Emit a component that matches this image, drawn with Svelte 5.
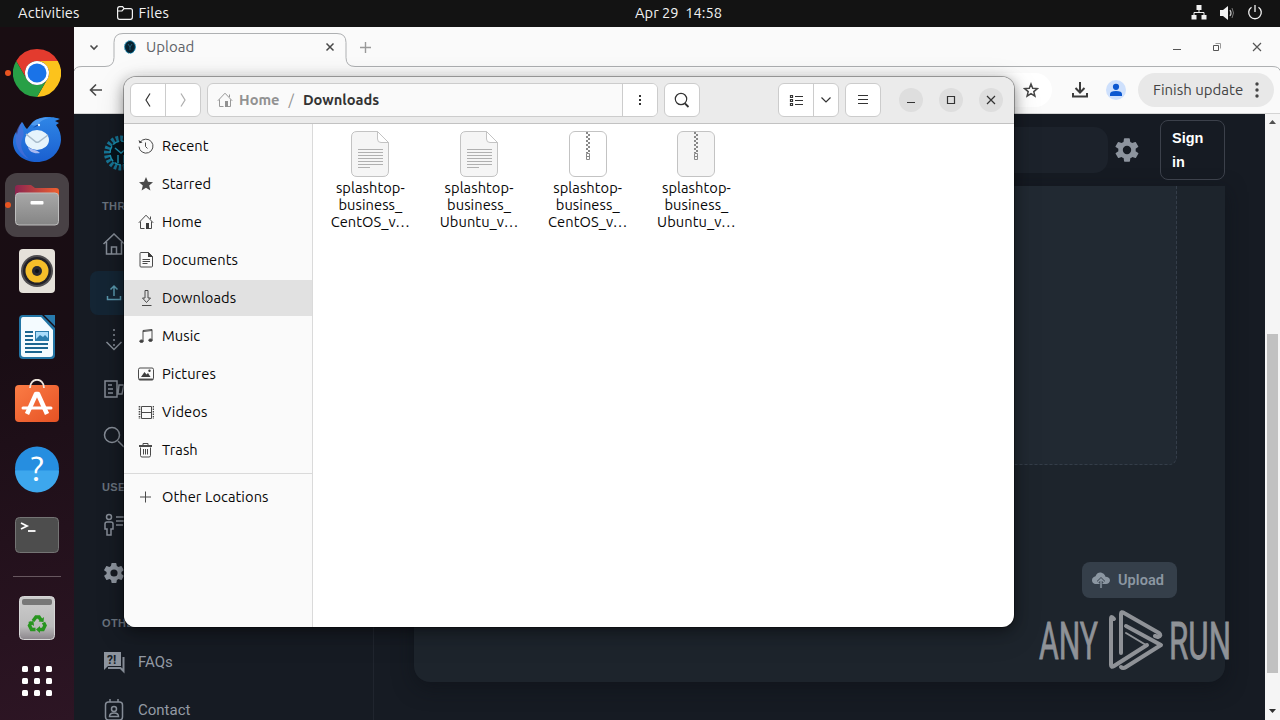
<script lang="ts">
	type Place = { name: string; icon: string };

	const places: Place[] = [
		{ name: 'Recent', icon: 'recent' },
		{ name: 'Starred', icon: 'star' },
		{ name: 'Home', icon: 'home' },
		{ name: 'Documents', icon: 'document' },
		{ name: 'Downloads', icon: 'download' },
		{ name: 'Music', icon: 'music' },
		{ name: 'Pictures', icon: 'picture' },
		{ name: 'Videos', icon: 'video' },
		{ name: 'Trash', icon: 'trash' }
	];

	const files = [
		{ lines: ['splashtop-', 'business_', 'CentOS_v…'], kind: 'text' },
		{ lines: ['splashtop-', 'business_', 'Ubuntu_v…'], kind: 'text' },
		{ lines: ['splashtop-', 'business_', 'CentOS_v…'], kind: 'zip' },
		{ lines: ['splashtop-', 'business_', 'Ubuntu_v…'], kind: 'zip dim' }
	];

	const apps = ['chrome', 'thunderbird', 'files', 'rhythmbox', 'writer', 'software', 'help', 'terminal'];
	const running = ['chrome', 'files'];

	let selected = $state('Downloads');
</script>

{#snippet placeIcon(name: string)}
	<svg class="place-icon" width="16" height="16" viewBox="0 0 16 16" fill="none" stroke="#4a4a4a">
		{#if name === 'recent'}
			<path d="M2.2 4.2A7 7 0 1 1 1 8.6M7.5 4.5v4l2 2" />
			<path d="M.5 2l1 3.2 3-.8z" fill="#3d3d3d" stroke="none" />
		{:else if name === 'star'}
			<path d="M8 1l2 4.8 5 .4-3.8 3.3 1.2 5L8 11.8l-4.4 2.7 1.2-5L1 6.2l5-.4z" fill="#4a4a4a" stroke="none" />
		{:else if name === 'home'}
			<path d="M.8 8.8L8 1.2l7.2 7.6M2.5 7.5v7h4M13.5 7.5v7h-3M12.5 5V2.5" />
			<path d="M8 9h3v6H8z" fill="#3d3d3d" stroke="none" />
		{:else if name === 'document'}
			<path d="M3 .5h7.500l4 4v9.500q0 1-1 1h-10.500q-1 0-1-1v-12.500q0-1 1-1zM4.500 7.500h7.500M4.500 9.500h7.500M4.500 11.500h5" />
			<path d="M10 0v5h5z" fill="#3d3d3d" stroke="none" />
		{:else if name === 'download'}
			<path d="M7 .5h3v7.500h2.500L8.500 12.500 4.500 8H7zM4 15.500h9.500" />
		{:else if name === 'music'}
			<path d="M5 13V2.500l9-1V12M5 3.500l9-1" />
			<ellipse cx="3.500" cy="13.200" rx="1.700" ry="1.300" fill="#3d3d3d" /><ellipse cx="12.500" cy="12.200" rx="1.700" ry="1.300" fill="#3d3d3d" />
		{:else if name === 'picture'}
			<rect x=".5" y="2" width="15" height="12" rx="1.500" />
			<path d="M1 13.300h14" stroke-width="1.500" />
			<path d="M3 11l3.500-5 2 2.500L10 7l2.500 4z" fill="#3d3d3d" stroke="none" /><circle cx="11.500" cy="4.800" r="1.200" fill="#3d3d3d" stroke="none" />
		{:else if name === 'video'}
			<path d="M3.500 2.500h10v12h-10zM3.500 8.500h10" />
			<path d="M1.500 2v13M15.500 2v13" stroke-width="1.600" stroke-dasharray="1.500 1" />
		{:else if name === 'trash'}
			<path d="M2.500 5.500v8q0 1.500 1.500 1.500h7q1.500 0 1.500-1.500v-8M5.500 7v5.500M7.500 7v5.500M9.500 7v5.500M5 3V1.500h5V3" />
			<path d="M1 4h13" stroke-width="2" />
		{:else}
			<path d="M7.500 2.500v11M2 8h11" />
		{/if}
	</svg>
{/snippet}

{#snippet gear(size: number)}
	<svg width={size} height={size} viewBox="0 0 24 24" fill="#8d949e">
		<path
			fill-rule="evenodd"
			d="M19.400 13a7.500 7.500 0 0 0 0-2l2.100-1.600a.5.500 0 0 0 .1-.7l-2-3.400a.5.500 0 0 0-.6-.2l-2.500 1a7.300 7.300 0 0 0-1.700-1l-.4-2.700a.5.500 0 0 0-.5-.4h-4a.5.500 0 0 0-.5.400l-.4 2.700a7.700 7.700 0 0 0-1.700 1l-2.500-1a.5.500 0 0 0-.6.200l-2 3.400a.5.500 0 0 0 .1.700L4.600 11a7.900 7.900 0 0 0 0 2l-2.200 1.600a.5.500 0 0 0-.1.700l2 3.400c.1.200.4.300.6.200l2.500-1a7.300 7.300 0 0 0 1.700 1l.4 2.700c0 .2.200.4.500.4h4c.2 0 .5-.2.500-.4l.4-2.700a7.700 7.700 0 0 0 1.700-1l2.500 1c.2.100.5 0 .6-.2l2-3.400a.5.500 0 0 0-.1-.7zM12 15.600a3.600 3.600 0 1 1 0-7.200 3.600 3.600 0 0 1 0 7.200z"
		/>
	</svg>
{/snippet}

{#snippet appIcon(name: string)}
	<svg width="48" height="48" viewBox="0 0 48 48">
		{#if name === 'chrome'}
			<path d="M24 0A24 24 0 0 1 44.800 12H24A12 12 0 0 0 13.600 30L3.200 12A24 24 0 0 1 24 0z" fill="#e33b2e" />
			<path d="M44.800 12A24 24 0 0 1 24 48L34.400 30A12 12 0 0 0 24 12z" fill="#fcc31c" />
			<path d="M3.200 12A24 24 0 0 0 24 48L34.400 30A12 12 0 0 1 13.600 30z" fill="#28a046" />
			<circle cx="24" cy="24" r="12" fill="#fff" /><circle cx="24" cy="24" r="9.500" fill="#1a73e8" />
		{:else if name === 'thunderbird'}
			<linearGradient id="bird" x2="0" y2="1"><stop stop-color="#2f86e6" /><stop offset="1" stop-color="#1a5fd0" /></linearGradient>
			<path d="M9 7c2 2 2 4 5 7l4-5c4-5 10-7 17-7 5 0 10 1 12 2l-5 2 4 2-3 2c4 5 5 10 5 15-1 13-11 22-24 22C11 47 0 39 0 27c0-4 1-7 3-10l1 3c1-5 2-9 5-13z" fill="url(#bird)" />
			<path d="M18 10c3-6 12-8 18-7-5 1-9 3-12 8z" fill="#4f9bf0" />
			<path d="M3 18c-2 11 3 22 13 26-7-6-10-14-6-22 2-4-1-8-1-15-3 3-5 7-6 11z" fill="#5370d8" opacity=".6" />
			<ellipse cx="24" cy="25" rx="12" ry="10" fill="#e6f4fc" />
			<path d="M13 19l10 8q2 1 4-1l8-6" fill="none" stroke="#a9bccb" stroke-width="1.500" />
			<path d="M15 32c4 3 8 2 12 6-6 1-11-1-12-6z" fill="#a8b9f1" />
			<path d="M20 13q4-5 8-3-5 1-8 3z" fill="#103f9c" />
			<circle cx="26" cy="10" r="1.200" fill="#eaf6ff" />
		{:else if name === 'files'}
			<linearGradient id="folder"><stop stop-color="#8b2450" /><stop offset="1" stop-color="#ef6130" /></linearGradient>
			<linearGradient id="drawer" x2="0" y2="1"><stop stop-color="#a8a8a8" /><stop offset="1" stop-color="#858585" /></linearGradient>
			<path d="M2 7q0-3 3-3h13l4 3h21q3 0 3 3v10H2z" fill="url(#folder)" />
			<rect x="2.500" y="12" width="43" height="32" rx="3.500" fill="url(#drawer)" stroke="#bebebe" />
			<rect x="17.500" y="20" width="13" height="3.500" rx="1" fill="#fff" />
		{:else if name === 'rhythmbox'}
			<rect x="6" y="2" width="36" height="44" rx="4" fill="#e5e1da" />
			<circle cx="24" cy="24" r="16" fill="#504e50" /><circle cx="24" cy="24" r="14" fill="#222128" /><circle cx="24" cy="24" r="11.500" fill="#f5be2a" /><circle cx="24" cy="24" r="5" fill="#292a32" /><circle cx="24" cy="24" r="2" fill="#101318" />
		{:else if name === 'writer'}
			<path d="M10 2h19l13 13v27q0 4-4 4H10q-4 0-4-4V6q0-4 4-4z" fill="#2375a5" />
			<path d="M10 4h18l12 13v24q0 3-3 3H11q-3 0-3-3V7q0-3 2-3z" fill="#f4fbff" /><path d="M31 2h11v11z" fill="#287aad" />
			<path d="M12 19h8M12 23h8M12 27h8M12 31h23M12 35h23M12 39h17" stroke="#1b6691" stroke-width="1.800" />
			<path d="M22 18h14v10H22z" fill="#2c7ead" /><path d="M23 19h12v6l-3-3-2 2-3-2-4 4z" fill="#a9dcfa" />
		{:else if name === 'software'}
			<linearGradient id="bag" x2="1" y2="1"><stop stop-color="#fb7c45" /><stop offset="1" stop-color="#e65224" /></linearGradient>
			<rect x="2" y="6" width="44" height="37" rx="4" fill="url(#bag)" />
			<path d="M17 9c0-11 14-11 14 0" fill="none" stroke="#eee5dc" stroke-width="1.800" />
			<path d="M14 35l9-20h2l9 20" fill="none" stroke="#fff" stroke-width="4.500" stroke-linejoin="round" /><path d="M10 29h28" stroke="#fff" stroke-width="3" stroke-linecap="round" />
		{:else if name === 'help'}
			<circle cx="24" cy="23.500" r="22" fill="#268ee0" /><path d="M2 25.500a22 22 0 0 0 44 0z" fill="#3da7ed" />
			<text x="24" y="35.500" text-anchor="middle" font-size="34" fill="#fff" font-family="Ubuntu, Open Sans, sans-serif">?</text>
		{:else}
			<rect x="2.500" y="6.500" width="43" height="35" rx="4" fill="#4d4d4d" stroke="#747474" />
			<path d="M8 12l6 3-6 3" fill="none" stroke="#fff" stroke-width="1.800" /><path d="M15 20h7.500" stroke="#fff" stroke-width="1.800" />
		{/if}
	</svg>
{/snippet}

<div class="desktop">
	<header class="topbar">
		<div class="topbar-left">
			<span>Activities</span>
			<svg width="16" height="14" viewBox="0 0 16 14" fill="none" stroke="#f2f2f2" stroke-width="1.200"><path d="M.6 3q0-2.400 2-2.400h3l1.500 2h6.300q2 0 2 2v6.400q0 2.400-2 2.400H2.600q-2 0-2-2.400zM.6 5H5l2-2.400" /></svg>
			<span>Files</span>
		</div>
		<span class="clock">Apr 29&nbsp; 14:58</span>
		<div class="tray">
			<svg width="16" height="16" viewBox="0 0 16 16" fill="#f2f2f2"><path d="M5.500 0h5v5h-5zM.5 10h5v4.500h-5zM10.500 10h5v4.500h-5z" /><path d="M8 5v3M3 11V7.500h10v3.500" fill="none" stroke="#f2f2f2" /></svg>
			<svg width="16" height="16" viewBox="0 0 16 16" fill="#f2f2f2"><path d="M1 5h3l5-4v14l-5-4H1z" /><path d="M11 5q2 3 0 6" fill="none" stroke="#c0c0c0" stroke-width="1.300" /><path d="M13 3q3 5 0 10" fill="none" stroke="#777" /></svg>
			<svg width="16" height="16" viewBox="0 0 16 16" fill="none" stroke="#f2f2f2" stroke-width="1.300"><path d="M8 0v7M4.500 2.200a6.300 6.300 0 1 0 7 0" /></svg>
		</div>
	</header>

	<aside class="dock">
		{#each apps as app}
			<div class="app" class:active={app === 'files'}>
				{#if running.includes(app)}<i class="dot"></i>{/if}
				{@render appIcon(app)}
			</div>
		{/each}
		<hr />
		<div class="app">
			<svg width="48" height="48" viewBox="0 0 48 48">
				<linearGradient id="bin" x2="0" y2="1"><stop stop-color="#ccc" /><stop offset=".7" stop-color="#bbb" /><stop offset="1" stop-color="#8b858b" /></linearGradient>
				<rect x="6.500" y="2.500" width="35" height="43" rx="4" fill="url(#bin)" stroke="#d6d6d6" /><rect x="9" y="5" width="30" height="6" rx="2" fill="#777" />
				<g fill="none" stroke="#28951f" stroke-width="3.500"><path d="M20 27l3-4h3l2 3M18.500 28l-2 3.500 2 4h4M26 35.500h4l2-4-1.500-3" /></g>
				<g fill="#28951f"><path d="M25.500 27.500l5 .5.500-5zM15 28l5.500-1 .5 5zM27 32v7l-4-3.500z" /></g>
			</svg>
		</div>
		<div class="app grid-app">
			<div class="dots">
				{#each Array(9) as _}<i></i>{/each}
			</div>
		</div>
	</aside>

	<main class="browser">
		<div class="tabstrip">
			<svg class="outline" width="1206" height="46" viewBox="0 0 1206 46" fill="none" stroke="#aeb0b2"><path d="M0 44q1-4.500 8-4.500h23q9 0 9-9v-15q0-9 9-9h214q9 0 9 9v15q0 9 9 9h917q7 0 8 4" /></svg>
			<svg class="tab-list" width="10" height="7" viewBox="0 0 10 7" fill="none" stroke="#4a4a4a" stroke-width="1.600"><path d="M1.500 1.500L5 5l3.500-3.500" /></svg>
			<div class="tab">
				<svg width="14" height="15" viewBox="0 0 14 15"><ellipse cx="7" cy="7" rx="5.500" ry="6.300" fill="#07354b" stroke="#1898c7" stroke-dasharray="1.500 1" /><ellipse cx="7" cy="7" rx="4" ry="5.500" fill="#08212e" /><path d="M5 4l2 3 2-3M7 7v3" stroke="#1b5b78" fill="none" /></svg>
				<span>Upload</span>
				<svg width="10" height="10" viewBox="0 0 10 10" stroke="#484848" stroke-width="1.500"><path d="M1.500 1.500l7 7M8.500 1.500l-7 7" /></svg>
			</div>
			<svg class="new-tab" width="11" height="11" viewBox="0 0 11 11" stroke="#999" stroke-width="1.400"><path d="M5.500 0v11M0 5.500h11" /></svg>
			<div class="browser-buttons">
				<svg width="10" height="10" viewBox="0 0 10 10" stroke="#555"><path d="M1 7.500h8" /></svg>
				<svg width="10" height="10" viewBox="0 0 10 10" fill="none" stroke="#555"><path d="M1.500 3.500h5v5h-5z" /><path d="M3.500 1.500h5v5" stroke="#999" /></svg>
				<svg width="10" height="10" viewBox="0 0 10 10" stroke="#555" stroke-width="1.200"><path d="M1 1l8 8M9 1L1 9" /></svg>
			</div>
		</div>

		<div class="toolbar">
			<svg width="14" height="14" viewBox="0 0 14 14" fill="none" stroke="#474747" stroke-width="1.600"><path d="M13 7H2M7 1.500L1.500 7 7 12.500" /></svg>
			<div class="omnibox">
				<svg width="16" height="16" viewBox="0 0 16 16" fill="none" stroke="#474747" stroke-width="1.500"><path d="M8 2l1.700 4.300 4.600.3-3.500 3 1.100 4.500L8 11.600l-3.900 2.500 1.100-4.500-3.500-3 4.600-.3z" /></svg>
			</div>
			<svg class="dl" width="18" height="18" viewBox="0 0 18 18" fill="none" stroke="#3c3c3c" stroke-width="2"><path d="M9 1v10M4.500 7L9 11.500 13.500 7M2 12v3.500h14V12" /></svg>
			<svg class="profile" width="20" height="20" viewBox="0 0 20 20"><circle cx="10" cy="10" r="10" fill="#cee0fc" /><g fill="#0b57d0"><circle cx="10" cy="6.800" r="3.100" /><path d="M4 16v-2q0-3 6-3t6 3v2z" /></g></svg>
			<div class="finish">
				<span>Finish update</span>
				<svg width="4" height="16" viewBox="0 0 4 16" fill="#444"><circle cx="2" cy="2" r="1.700" /><circle cx="2" cy="8" r="1.700" /><circle cx="2" cy="14" r="1.700" /></svg>
			</div>
		</div>

		<div class="page">
			<nav class="sidenav">
				<div class="brand">
					<svg width="40" height="40" viewBox="0 0 40 40"><ellipse cx="20" cy="20" rx="14" ry="14.500" fill="none" stroke="#167494" stroke-width="6" stroke-dasharray="2.600 1.800" /><ellipse cx="20" cy="20" rx="11" ry="12" fill="#07141d" stroke="#1a8fae" stroke-width="1.500" stroke-dasharray="7 2" /><path d="M14 15l6 5 6-5M17 22v8M23 22v8" fill="none" stroke="#2094b4" stroke-width="1.500" /></svg>
				</div>
				<h6>THREATS</h6>
				<a href="#home"><svg width="24" height="24" viewBox="0 0 24 24"><path d="M1.500 11L12 1l10.500 10M4.500 9v12h15V9M9.500 21v-7h5v7" /></svg></a>
				<a href="#upload" class="current"><svg width="24" height="24" viewBox="0 0 24 24"><path d="M12 15V5M8.500 8.500L12 5l3.500 3.500M5.500 15v3.500h13V15" /></svg></a>
				<a href="#submissions"><svg width="24" height="24" viewBox="0 0 24 24"><path d="M12 0v18" stroke-dasharray="2 3" /><path d="M4.500 13l7.500 7.500 7.500-7.500" /></svg></a>
				<a href="#reports"><svg width="24" height="24" viewBox="0 0 24 24"><path d="M3 4h12v16H3zM17 8h5l-2 9h-4zM6 8h4M6 12h5M6 16h5" /></svg></a>
				<a href="#search"><svg width="24" height="24" viewBox="0 0 24 24"><circle cx="10" cy="10" r="7.500" /><path d="M16 16l6 6" /></svg></a>
				<h6>USER</h6>
				<a href="#user"><svg width="24" height="24" viewBox="0 0 24 24"><circle cx="7" cy="4" r="2.500" /><path d="M5 9h4q2 0 2 2v5H9v6H5v-6H3v-5q0-2 2-2zM14 4h10M14 8h10M14 12h7" /></svg></a>
				<a href="#settings">{@render gear(24)}</a>
				<h6 class="other">OTHER</h6>
				<a href="#faqs">
					<svg width="24" height="24" viewBox="0 0 24 24"><path d="M2 2h17v14H6l-4 4z" fill="#8d949e" stroke="none" /><path d="M21.500 7v14l-3-3H6" stroke-width="2" /><text x="5" y="14" font-size="12" font-weight="700" fill="#171e27" stroke="none" font-family="Roboto">?!</text></svg>
					<span>FAQs</span>
				</a>
				<a href="#contact"><svg width="24" height="24" viewBox="0 0 24 24"><rect x="3.500" y="4" width="17" height="18" rx="3" /><circle cx="12" cy="11" r="2.500" /><path d="M7.500 18.500q0-3.500 4.500-3.500t4.500 3.500zM8 1v3M16 1v3" /></svg><span>Contact</span></a>
			</nav>
			<section class="content">
				<div class="page-header">
					<div class="searchbox"></div>
					{@render gear(28)}
					<button class="sign">Sign<br />in</button>
				</div>
				<div class="card">
					<div class="dropzone"></div>
					<button class="upload">
						<svg width="18" height="18" viewBox="0 0 18 18"><path d="M4.500 13C1 13 0 11 0 9s2-3.500 3.500-3.700C5 1.500 8 1 10 2c2 .5 3 2 3.500 3.700C16 6 18 7 18 9.300S16 13 14 13z" fill="#8c97a2" /><path d="M9 17V8M6 11l3-3 3 3" fill="none" stroke="#3b4550" stroke-width="3" /><path d="M9 17V8M6 11l3-3 3 3" fill="none" stroke="#8c97a2" stroke-width="1.400" /></svg>
						<span>Upload</span>
					</button>
				</div>
				<svg class="watermark" width="204" height="68" viewBox="0 0 204 68">
					<g fill="#8f9297" stroke="#8f9297" stroke-width=".8" font-family="Roboto, sans-serif" font-size="51">
						<text x="1" y="49" textLength="59" lengthAdjust="spacingAndGlyphs">ANY</text>
						<text x="131" y="49" textLength="62" lengthAdjust="spacingAndGlyphs">RUN</text>
					</g>
					<g fill="none" stroke="#8f9297" stroke-width="4" stroke-linejoin="round" stroke-linecap="round">
						<path d="M76 9q-3-4-3 0v46q0 3 3 1l33-21" /><path d="M83 43V4q0-3 3-1l35 20q3 3-1 4l-3-1" /><path d="M88 16l35 19-35 22q-3 2-5 0" /><path d="M78 55l30-20-20-12" stroke-width="2" />
					</g>
				</svg>
			</section>
			<div class="scrollbar">
				<svg width="9" height="6" viewBox="0 0 9 6"><path d="M1 5l3.500-4L8 5z" fill="#505050" /></svg>
				<i class="thumb"></i>
				<svg width="9" height="6" viewBox="0 0 9 6"><path d="M1 1l3.500 4L8 1z" fill="#303030" /></svg>
			</div>
		</div>
	</main>

	<div class="window">
		<div class="headerbar">
			<div class="group nav">
				<button aria-label="Back"><svg width="8" height="16" viewBox="0 0 8 16"><path d="M6 1.500L2 8l4 6.500" /></svg></button>
				<button class="off" aria-label="Forward"><svg width="8" height="16" viewBox="0 0 8 16"><path d="M2 1.500L6 8l-4 6.500" /></svg></button>
			</div>
			<div class="group path">
				<div class="crumbs">
					{@render placeIcon('home')}
					<span class="parent">Home</span><span class="slash">/</span><b>Downloads</b>
				</div>
				<button aria-label="Path menu"><svg width="4" height="12" viewBox="0 0 4 12" fill="#333" class="solid"><path d="M1 1h2v2H1zM1 5h2v2H1zM1 9h2v2H1z" /></svg></button>
			</div>
			<div class="group single"><button aria-label="Search"><svg width="16" height="16" viewBox="0 0 16 16"><circle cx="7" cy="7" r="5.700" /><path d="M11 11.500l3.500 3.500" stroke-width="1.800" /></svg></button></div>
			<div class="group view">
				<button aria-label="List view"><svg width="14" height="12" viewBox="0 0 14 12"><path d="M1.500 1.500h2v2h-2zM1.500 5.500h2v2h-2zM1.500 9.500h2v2h-2zM6 2.500h8M6 6.500h8M6 10.500h8" /></svg></button>
				<button aria-label="View options"><svg width="12" height="8" viewBox="0 0 12 8"><path d="M1.500 1.500L6 6l4.500-4.500" /></svg></button>
			</div>
			<div class="group single"><button aria-label="Menu"><svg width="12" height="12" viewBox="0 0 12 12"><path d="M1 1.500h10M1 5.500h10M1 9.500h10" /></svg></button></div>
			<div class="controls">
				<button aria-label="Minimize"><svg width="10" height="10" viewBox="0 0 10 10"><path d="M1 7.500h8" /></svg></button>
				<button aria-label="Maximize"><svg width="10" height="10" viewBox="0 0 10 10"><path d="M1.500 1.500h7v7h-7z" /></svg></button>
				<button aria-label="Close"><svg width="10" height="10" viewBox="0 0 10 10"><path d="M1 1l8 8M9 1L1 9" /></svg></button>
			</div>
		</div>
		<div class="window-body">
			<div class="places">
				{#each places as place}
					<button class="place" class:selected={selected === place.name} onclick={() => (selected = place.name)}>
						{@render placeIcon(place.icon)}
						<span>{place.name}</span>
					</button>
				{/each}
				<hr />
				<button class="place">
					{@render placeIcon('plus')}
					<span>Other Locations</span>
				</button>
			</div>
			<div class="files">
				{#each files as file}
					<div class="file">
						<svg class={file.kind} width="40" height="48" viewBox="0 0 40 48" fill="none">
							{#if file.kind === 'text'}
								<path d="M7 1.500h20.500l11 11V41q0 5.500-5.500 5.500H7q-5.500 0-5.500-5.500V7q0-5.500 5.500-5.500z" fill="#f5f5f5" stroke="#c3c3c3" />
								<path d="M27.500 1.500V9q0 3.500 3.500 3.500h7.500z" fill="#fff" stroke="#c3c3c3" />
								<path d="M8 19.500h25M8 22.500h25M8 25.500h25M8 28.500h25M8 31.500h25M8 34.500h25M8 37.500h12" stroke="#b0b0b0" />
							{:else}
								<rect class="sheet" x="1.500" y="1.500" width="37" height="45" rx="5.500" stroke="#c3c3c3" />
								<path d="M19 2v21" stroke="#888" stroke-width="2" stroke-dasharray="2" /><path d="M21 4v19" stroke="#888" stroke-width="2" stroke-dasharray="2" />
								<path d="M18.500 23.500h3v6h-3zM18.500 26.500h3" stroke="#8a8a8a" />
							{/if}
						</svg>
						{#each file.lines as line}<span>{line}</span>{/each}
					</div>
				{/each}
			</div>
		</div>
	</div>
</div>

<style>
	:global(body) {
		margin: 0;
		overflow: hidden;
	}

	* {
		box-sizing: border-box;
	}

	button {
		border: 0;
		padding: 0;
		margin: 0;
		background: none;
		font: inherit;
		letter-spacing: inherit;
		color: inherit;
	}

	svg {
		flex: none;
		display: block;
	}

	.desktop {
		position: relative;
		width: 1280px;
		height: 720px;
		overflow: hidden;
		display: grid;
		grid-template: 27px 693px / 74px 1206px;
		font: 14.67px/20px Ubuntu, 'Noto Sans', 'Open Sans', sans-serif;
		background: #161b23;
	}

	.topbar {
		grid-column: 1 / 3;
		display: grid;
		grid-template-columns: 1fr auto 1fr;
		align-items: center;
		padding: 0 17px 1px 18px;
		background: #131313;
		color: #f2f2f2;
		font-size: 14.67px;
	}

	.topbar-left {
		display: flex;
		align-items: center;
		gap: 6px;
		letter-spacing: 0.15px;
	}

	.topbar-left svg {
		margin-left: 31px;
	}

	.clock {
		position: relative;
		left: 38px;
	}

	.tray {
		display: flex;
		justify-content: flex-end;
		gap: 12px;
	}

	.dock {
		display: flex;
		flex-direction: column;
		align-items: center;
		gap: 2px;
		padding-top: 14px;
		background: linear-gradient(165deg, #190d12, #190d14 45%, #2d1524);
	}

	.app {
		position: relative;
		flex: none;
		width: 64px;
		height: 64px;
		display: grid;
		place-items: center;
		border-radius: 12px;
	}

	.app.active {
		background: #484145;
	}

	.dot {
		position: absolute;
		left: 0;
		top: 29px;
		width: 6px;
		height: 6px;
		border-radius: 50%;
		background: #e95420;
	}

	.dock hr {
		width: 48px;
		margin: 7px 0;
		border: 0;
		border-top: 1px solid #67575f;
	}

	.grid-app {
		margin-top: -3px;
	}

	.dots {
		display: grid;
		grid-template-columns: repeat(3, 6px);
		gap: 6px;
	}

	.dots i {
		width: 6px;
		height: 6px;
		border-radius: 1.5px;
		background: #fff;
	}

	.browser {
		display: flex;
		flex-direction: column;
		background: #fafafa;
	}

	.tabstrip {
		position: relative;
		height: 39px;
		display: flex;
		align-items: center;
		padding: 1px 18px 0 15px;
	}

	.outline {
		position: absolute;
		left: 0;
		top: 0;
	}

	.tab {
		display: flex;
		align-items: center;
		width: 232px;
		margin-left: 15px;
		padding: 0 11px 0 9px;
		color: #5f6368;
	}

	.tab span {
		flex: 1;
		margin-left: 9px;
		font-size: 15px;
	}

	.new-tab {
		margin-left: 14px;
	}

	.browser-buttons {
		display: flex;
		gap: 30px;
		margin-left: auto;
	}

	.toolbar {
		height: 48px;
		display: flex;
		align-items: center;
		padding: 0 6px 0 15px;
		border-bottom: 1px solid #d4d4d4;
	}

	.omnibox {
		flex: 1;
		height: 34px;
		margin: 0 19px 0 18px;
		padding-right: 13px;
		display: flex;
		align-items: center;
		justify-content: flex-end;
		border-radius: 17px;
		background: #fff;
	}

	.profile {
		margin: 0 12px 0 17px;
	}

	.finish {
		width: 136px;
		height: 34px;
		display: flex;
		align-items: center;
		justify-content: space-between;
		padding: 0 15px;
		border-radius: 17px;
		background: #e8e8e8;
		color: #444;
		font-size: 15px;
	}

	.page {
		flex: 1;
		min-height: 0;
		display: flex;
		background: #161b23;
	}

	.sidenav {
		width: 300px;
		flex: none;
		overflow: hidden;
		padding: 19px 16px 0;
		border-right: 1px solid #20252e;
		color: #939aa4;
	}

	.brand {
		height: 48px;
		padding-left: 11px;
	}

	h6 {
		height: 40px;
		margin: 0;
		padding: 16px 0 0 12px;
		font: 700 11px/20px 'Liberation Sans', sans-serif;
		letter-spacing: 0.4px;
		color: #68717c;
	}

	.brand + h6 {
		padding-top: 15px;
	}

	h6.other {
		height: 41px;
	}

	.sidenav a {
		height: 48px;
		padding-left: 12px;
		display: flex;
		align-items: center;
		gap: 12px;
		color: inherit;
		text-decoration: none;
		font-family: Roboto, sans-serif;
		font-size: 15px;
	}

	.sidenav a > svg {
		fill: none;
		stroke: #858c96;
		stroke-width: 1.5;
	}

	.sidenav a[href='#settings'] > svg {
		fill: #8d949e;
		stroke: none;
	}

	.sidenav a.current {
		height: 44px;
		margin: 2px 0;
		border-radius: 8px;
		background: #142534;
	}

	.sidenav a.current > svg {
		stroke: #5795aa;
	}

	.content {
		position: relative;
		flex: 1;
		padding: 0 40px;
	}

	.page-header {
		height: 72px;
		display: flex;
		align-items: center;
	}

	.searchbox {
		flex: 1;
		height: 46px;
		margin-right: 5px;
		border-radius: 14px;
		background: #1c222b;
	}

	.sign {
		width: 65px;
		height: 60px;
		margin-left: 19px;
		padding-left: 11px;
		text-align: left;
		border: 1px solid #3c414b;
		border-radius: 8px;
		color: #fff;
		font: 700 14.5px/24px 'Liberation Sans', sans-serif;
	}

	.card {
		height: 496px;
		padding: 0 48px;
		display: flex;
		flex-direction: column;
		align-items: flex-end;
		border-radius: 0 0 16px 16px;
		background: #1d242c;
		box-shadow: 0 6px 20px rgba(12, 15, 22, 0.5);
	}

	.dropzone {
		width: 100%;
		height: 279px;
		border: 1px dashed #343d49;
		border-top: 0;
		border-radius: 0 0 8px 8px;
		background: #212932;
	}

	.upload {
		width: 95px;
		height: 36px;
		margin-top: 97px;
		padding-right: 3px;
		display: flex;
		align-items: center;
		justify-content: center;
		gap: 8px;
		border-radius: 8px;
		background: #353f4a;
		color: #8c97a2;
		font: 600 14.5px Roboto, sans-serif;
		letter-spacing: 0.1px;
	}

	.watermark {
		position: absolute;
		left: 664px;
		top: 496px;
	}

	.scrollbar {
		width: 15px;
		padding: 5px 0 6px;
		display: flex;
		flex-direction: column;
		align-items: center;
		background: #f5f5f5;
	}

	.thumb {
		width: 11px;
		height: 339px;
		margin: 209px 0 auto;
		background: #c1c1c1;
	}

	.window {
		position: absolute;
		left: 124px;
		top: 77px;
		width: 890px;
		height: 550px;
		overflow: hidden;
		display: flex;
		flex-direction: column;
		border-radius: 12px;
		background: #fff;
		box-shadow: 0 0 0 1px rgba(0, 0, 0, 0.3), 0 3px 14px rgba(0, 0, 0, 0.42), 0 8px 30px rgba(0, 0, 0, 0.15);
		color: #080808;
	}

	.headerbar {
		height: 47px;
		flex: none;
		display: flex;
		align-items: center;
		padding: 0 11px 1px 6px;
		background: #ebebeb;
		border-bottom: 1px solid #c2c2c2;
	}

	.group {
		height: 34px;
		display: flex;
		border: 1px solid #ccc;
		border-radius: 6px;
		background: #fff;
		overflow: hidden;
	}

	.headerbar button {
		flex: 1;
		display: grid;
		place-items: center;
	}

	.headerbar button svg:not(.solid) {
		fill: none;
		stroke: #333;
		stroke-width: 1.2;
	}

	.group button + button {
		border-left: 1px solid #ccc;
	}

	.nav {
		width: 71px;
	}

	.nav .off svg {
		opacity: 0.4;
	}

	.path {
		width: 451px;
		margin: 0 6px;
		background: #fafafa;
	}

	.crumbs {
		flex: 1;
		display: flex;
		align-items: center;
		padding-left: 9px;
		color: #333;
	}

	.crumbs .place-icon {
		opacity: 0.55;
	}

	.parent,
	.slash {
		color: #929292;
	}

	.parent {
		margin-left: 6px;
		font-weight: 700;
	}

	.slash {
		margin: 0 9px;
	}

	.crumbs b,
	.parent {
		font-size: 14.67px;
	}

	.path button {
		flex: 0 0 35px;
		background: #fff;
		border-left: 1px solid #ccc;
	}

	.single {
		width: 36px;
	}

	.view {
		width: 61px;
		margin: 0 6px 0 78px;
	}

	.view button:last-child {
		flex: 0 0 25px;
	}

	.controls {
		display: flex;
		gap: 16px;
		margin-left: auto;
	}

	.controls button {
		width: 24px;
		height: 24px;
		border-radius: 50%;
		background: #dedede;
	}

	.window-body {
		flex: 1;
		display: flex;
		letter-spacing: 0.07px;
	}

	.places {
		width: 189px;
		display: flex;
		flex-direction: column;
		gap: 2px;
		padding-top: 4px;
		border-right: 1px solid #dadada;
		background: #fafafa;
	}

	.place {
		height: 36px;
		display: flex;
		align-items: center;
		gap: 8px;
		padding-left: 14px;
	}

	.place.selected {
		background: #e1e1e1;
	}

	.places hr {
		width: 100%;
		margin: 3px 0;
		border: 0;
		border-top: 1px solid #dadada;
	}

	.files {
		display: flex;
		padding: 6px 0 0 3px;
	}

	.file {
		width: 108.7px;
		display: flex;
		flex-direction: column;
		align-items: center;
		line-height: 17px;
	}

	.file svg {
		margin-bottom: 1px;
	}

	.sheet {
		fill: #fff;
	}

	.dim .sheet {
		fill: #f5f5f5;
	}
</style>
